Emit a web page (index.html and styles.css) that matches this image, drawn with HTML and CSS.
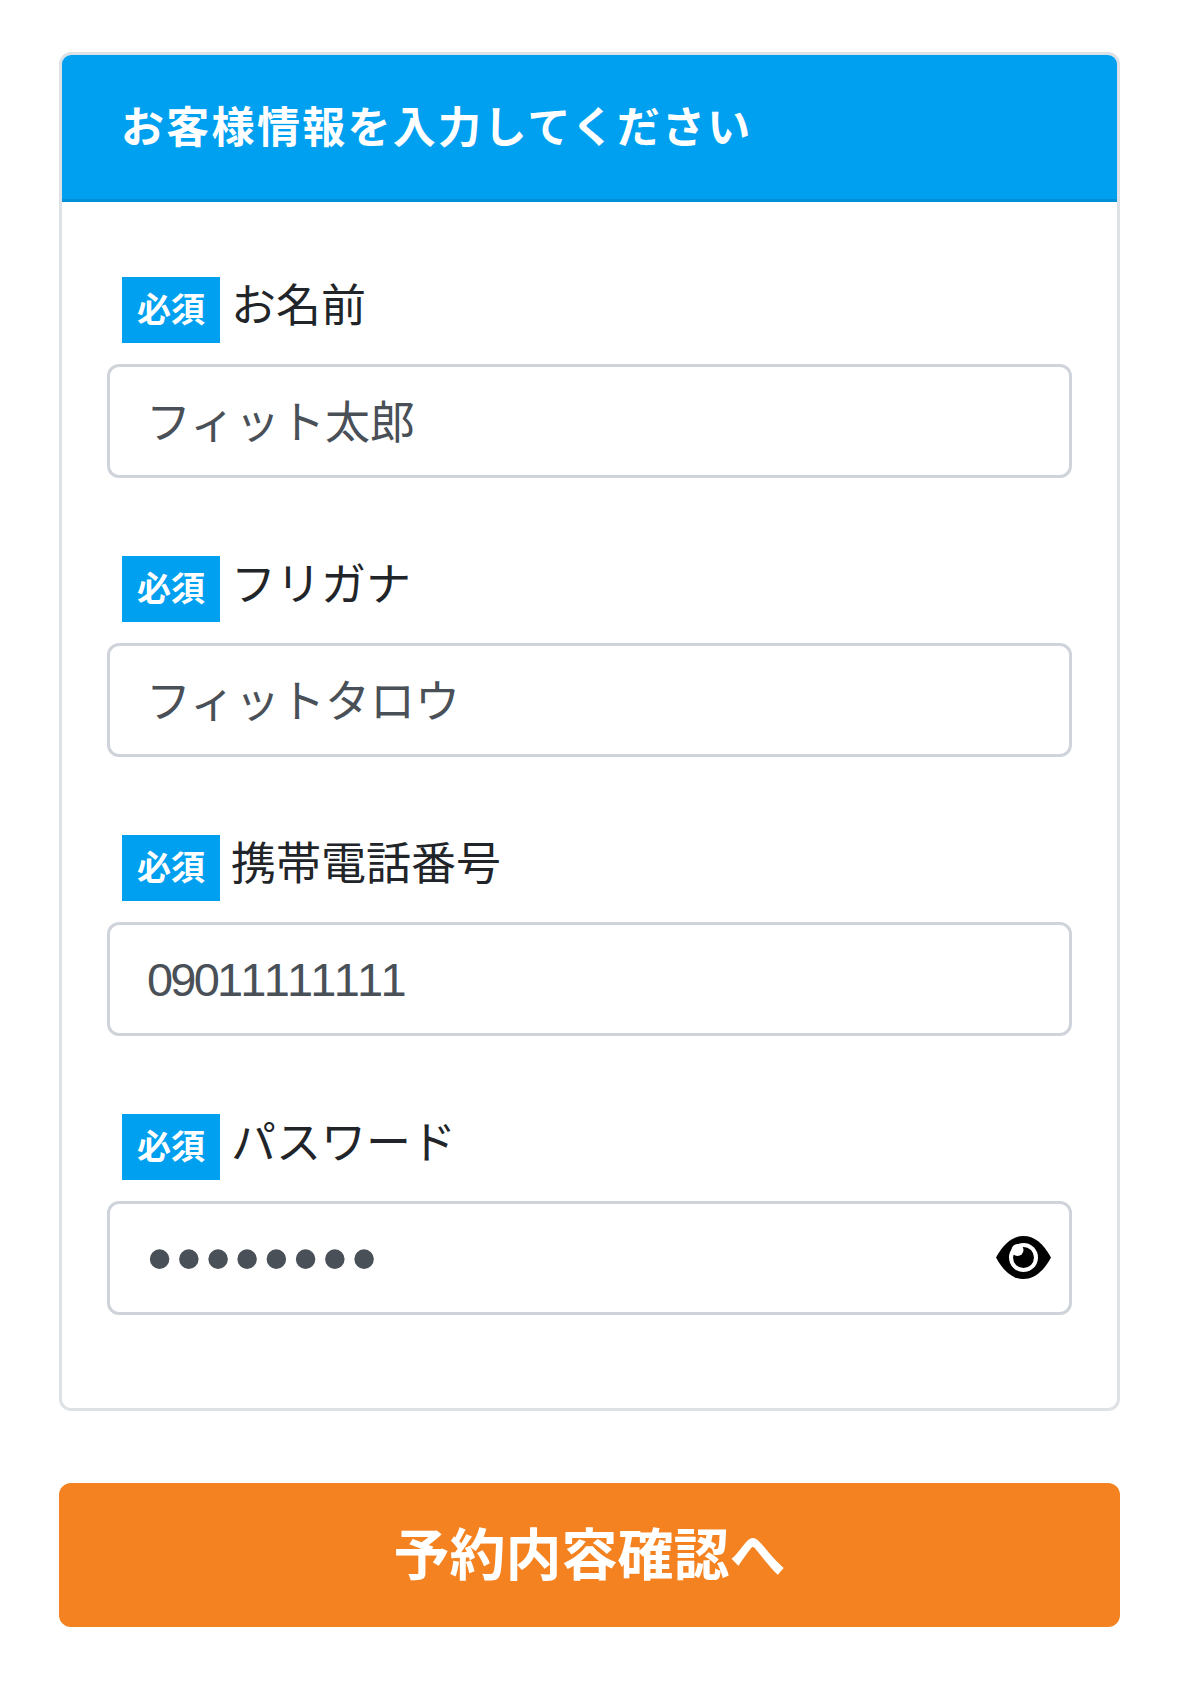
FILE: index.html
```html
<!DOCTYPE html>
<html lang="ja">
<head>
    <meta charset="UTF-8">
    <meta name="viewport" content="width=device-width, initial-scale=1.0">
    <title>お客様情報入力</title>
    <link rel="stylesheet" href="styles.css">
</head>
<body>

    <form class="customer-form">
        <div class="card">
            <div class="card-header">お客様情報を入力してください</div>
            <div class="card-body">
                <div class="form-group">
                    <label class="form-label" for="name"><span class="badge">必須</span><span class="label-text">お名前</span></label>
                    <input class="form-control" type="text" id="name" value="フィット太郎">
                </div>
                <div class="form-group">
                    <label class="form-label" for="kana"><span class="badge">必須</span><span class="label-text">フリガナ</span></label>
                    <input class="form-control" type="text" id="kana" value="フィットタロウ">
                </div>
                <div class="form-group">
                    <label class="form-label" for="tel"><span class="badge">必須</span><span class="label-text">携帯電話番号</span></label>
                    <input class="form-control form-control-tel" type="tel" id="tel" value="09011111111">
                </div>
                <div class="form-group">
                    <label class="form-label" for="password"><span class="badge">必須</span><span class="label-text">パスワード</span></label>
                    <div class="password-wrap">
                        <input class="form-control form-control-password" type="password" id="password" value="password">
                        <svg class="eye-icon" viewBox="0 0 55 43" width="55" height="43" aria-hidden="true">
                            <path d="M0 21.5C8 7 17 0 27.5 0S47 7 55 21.5C47 36 38 43 27.5 43S8 36 0 21.5Z" fill="#000"/>
                            <circle cx="27.5" cy="21.5" r="14.5" fill="#fff"/>
                            <circle cx="27.5" cy="21.5" r="10.5" fill="#000"/>
                            <circle cx="21.5" cy="14" r="6" fill="#fff"/>
                        </svg>
                    </div>
                </div>
            </div>
        </div>
        <button class="submit-btn" type="button">予約内容確認へ</button>
    </form>

</body>
</html>
```

FILE: styles.css
```css
* {
    box-sizing: border-box;
}
body {
    margin: 0;
    background-color: #fff;
    font-family: "Liberation Sans", "Noto Sans CJK JP", sans-serif;
    color: #212529;
}
.customer-form {
    padding: 52px 59px 76px;
}
.card {
    border: 3px solid #dee2e6;
    border-radius: 12px;
    overflow: hidden;
    background-color: #fff;
}
.card-header {
    height: 147px;
    padding-left: 59px;
    background-color: #00a0f0;
    border-bottom: 3px solid #0090d8;
    color: #fff;
    font-size: 43px;
    font-weight: 700;
    letter-spacing: 2.3px;
    line-height: 147px;
}
.card-body {
    padding: 75px 45px 93px;
}
.form-group {
    margin-bottom: 78px;
}
.form-group:last-child {
    margin-bottom: 0;
}
.form-label {
    display: flex;
    align-items: flex-start;
    margin-left: 15px;
    margin-bottom: 21px;
}
.badge {
    width: 98px;
    height: 66px;
    background-color: #00a0f0;
    color: #fff;
    font-size: 34px;
    font-weight: 700;
    line-height: 67px;
    text-align: center;
}
.label-text {
    margin-left: 11px;
    font-size: 45px;
    line-height: 60px;
}
.form-control {
    display: block;
    width: 100%;
    height: 114px;
    padding: 0 36px 4px;
    border: 3px solid #ced4da;
    border-radius: 12px;
    background-color: #fff;
    color: #495057;
    font-family: inherit;
    font-size: 45px;
}
.form-control-tel {
    padding-bottom: 0;
    padding-left: 37px;
    font-size: 47px;
    font-kerning: none;
    letter-spacing: -2.8px;
}
.form-control-password {
    padding-bottom: 0;
    padding-left: 37px;
    font-size: 72px;
    letter-spacing: 4px;
}
.password-wrap {
    position: relative;
}
.eye-icon {
    position: absolute;
    top: 35px;
    right: 21px;
}
.submit-btn {
    display: block;
    width: 100%;
    height: 144px;
    margin-top: 72px;
    padding-bottom: 10px;
    border: none;
    border-radius: 12px;
    background-color: #f58220;
    color: #fff;
    font-family: inherit;
    font-size: 56px;
    font-weight: 700;
}
```
